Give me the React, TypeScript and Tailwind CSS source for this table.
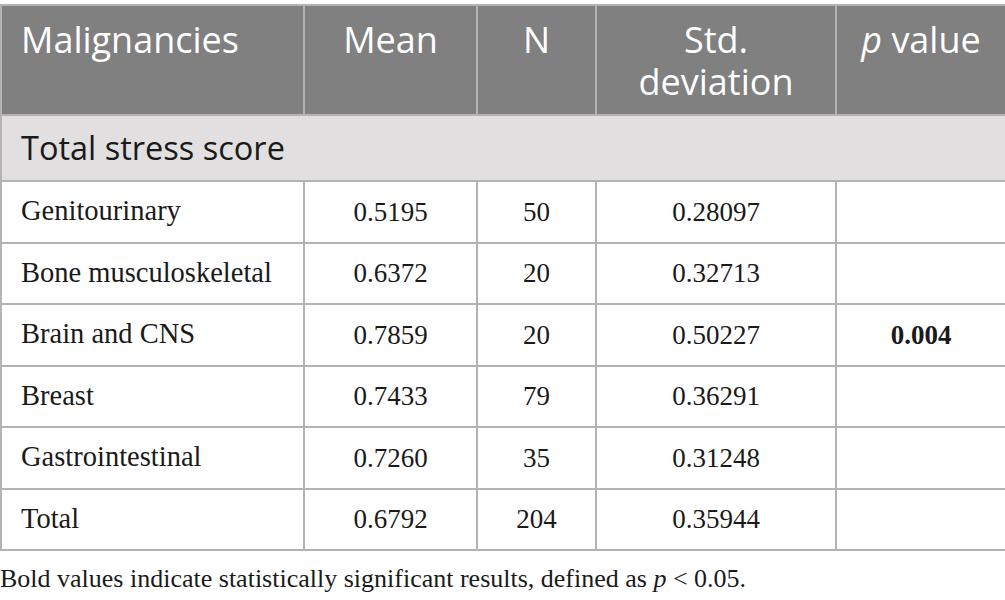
const rows = [
  { name: "Genitourinary", mean: "0.5195", n: "50", sd: "0.28097", p: "" },
  { name: "Bone musculoskeletal", mean: "0.6372", n: "20", sd: "0.32713", p: "" },
  { name: "Brain and CNS", mean: "0.7859", n: "20", sd: "0.50227", p: "0.004" },
  { name: "Breast", mean: "0.7433", n: "79", sd: "0.36291", p: "" },
  { name: "Gastrointestinal", mean: "0.7260", n: "35", sd: "0.31248", p: "" },
  { name: "Total", mean: "0.6792", n: "204", sd: "0.35944", p: "" },
];

export default function App() {
  return (
    <div className="w-[1005px] h-[600px] bg-white pt-[4px] overflow-hidden">
      <table className="w-[1005px] border-collapse table-fixed">
        <colgroup>
          <col className="w-[303px]" />
          <col className="w-[173px]" />
          <col className="w-[119px]" />
          <col className="w-[240px]" />
          <col className="w-[170px]" />
        </colgroup>
        <thead>
          <tr className="h-[110px] bg-[#7f807f] text-white font-['Open_Sans',sans-serif] text-[36px] leading-[42px]">
            <th className="border-2 border-[#b3b3b3] align-top text-left font-normal pl-[19px] pt-[13px]">Malignancies</th>
            <th className="border-2 border-[#b3b3b3] align-top text-center font-normal pt-[13px]">Mean</th>
            <th className="border-2 border-[#b3b3b3] align-top text-center font-normal pt-[13px]">N</th>
            <th className="border-2 border-[#b3b3b3] align-top text-center font-normal pt-[13px]">
              Std.
              <br />
              deviation
            </th>
            <th className="border-2 border-[#b3b3b3] align-top text-center font-normal pt-[13px]">
              <span className="italic">p</span> value
            </th>
          </tr>
        </thead>
        <tbody>
          <tr className="h-[66px] bg-[#e1dfe0]">
            <td colSpan={5} className="border-2 border-[#b3b3b3] pl-[19px] font-['Open_Sans',sans-serif] text-[32.5px] text-[#1a1a1a]">
              Total stress score
            </td>
          </tr>
          {rows.map((r) => (
            <tr key={r.name} className="h-[61.5px] font-['Liberation_Serif',serif] text-[27px] text-[#1a1a1a]">
              <td className="border-2 border-[#b3b3b3] pl-[19px] text-[28.5px]">{r.name}</td>
              <td className="border-2 border-[#b3b3b3] text-center">{r.mean}</td>
              <td className="border-2 border-[#b3b3b3] text-center">{r.n}</td>
              <td className="border-2 border-[#b3b3b3] text-center">{r.sd}</td>
              <td className="border-2 border-[#b3b3b3] text-center font-bold">{r.p}</td>
            </tr>
          ))}
        </tbody>
      </table>
      <p className="mt-[8px] font-['Liberation_Serif',serif] text-[26px] text-[#1a1a1a]">
        Bold values indicate statistically significant results, defined as <span className="italic">p</span> &lt; 0.05.
      </p>
    </div>
  );
}
